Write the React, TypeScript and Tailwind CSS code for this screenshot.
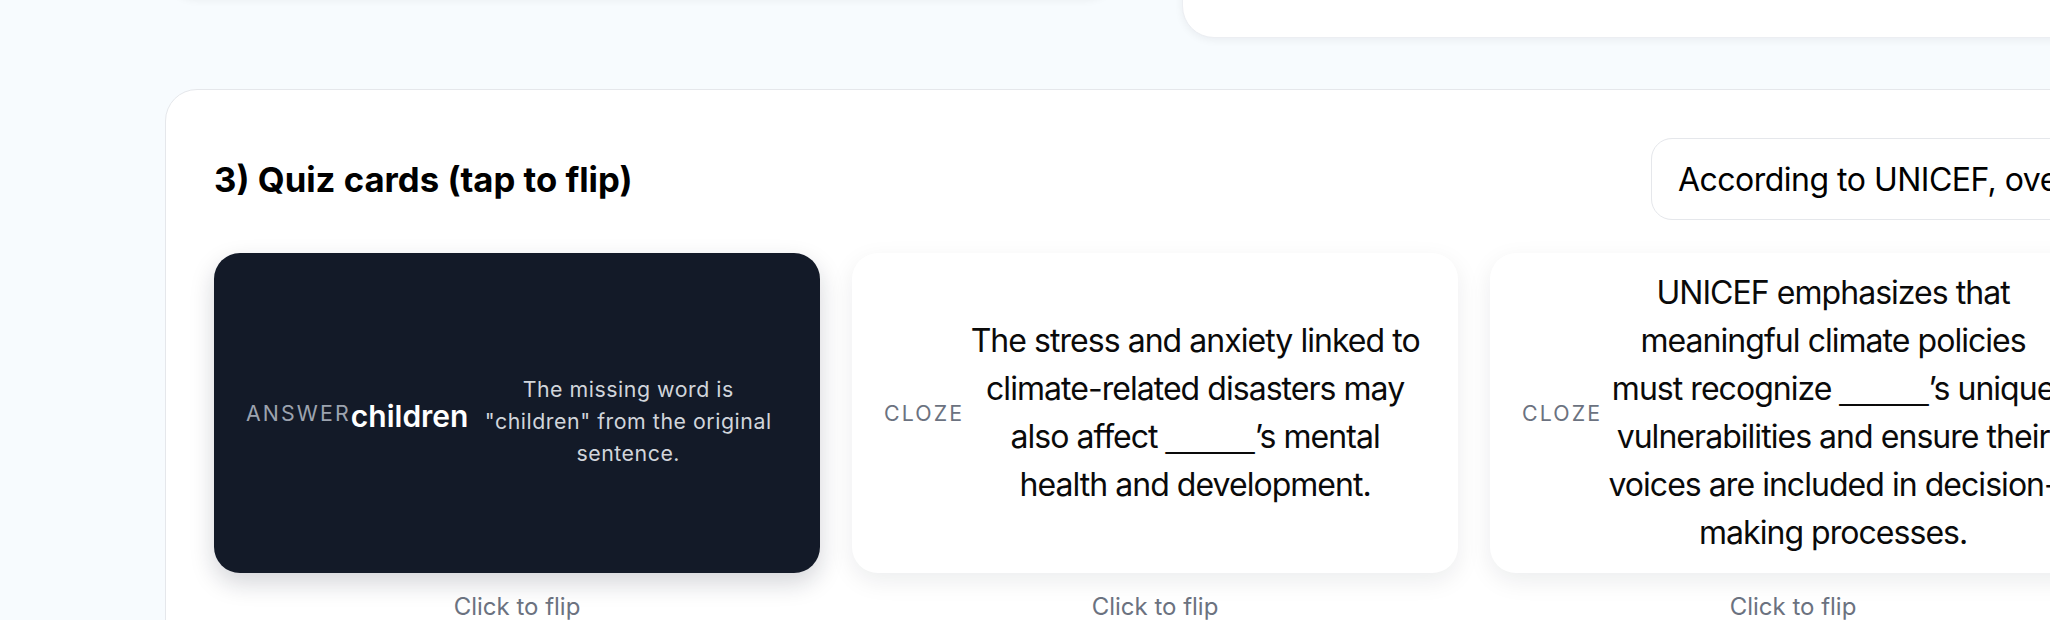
import React from 'react';

type QuizCard = {
  label: string;
  answer?: string;
  text: string;
  flipped: boolean;
};

const BLANK = '_____';

const cards: QuizCard[] = [
  {
    label: 'Answer',
    answer: 'children',
    text: 'The missing word is "children" from the original sentence.',
    flipped: true,
  },
  {
    label: 'Cloze',
    text: 'The stress and anxiety linked to climate-related disasters may also affect _____\u2019s mental health and development.',
    flipped: false,
  },
  {
    label: 'Cloze',
    text: 'UNICEF emphasizes that meaningful climate policies must recognize _____\u2019s unique vulnerabilities and ensure their voices are included in decision-making processes.',
    flipped: false,
  },
];

// the blank uses a font whose underscores are wider and join up
const renderText = (text: string) => {
  const parts = text.split(BLANK);
  return parts.map((part, i) => (
    <React.Fragment key={i}>
      {part}
      {i < parts.length - 1 && (
        <span className="font-['Liberation_Sans',sans-serif] tracking-normal">{BLANK}</span>
      )}
    </React.Fragment>
  ));
};

const FlipCard: React.FC<{ card: QuizCard }> = ({ card }) => (
  <div className="flex flex-col items-center">
    <div
      className={`flex h-[320px] w-full items-center rounded-[26px] p-[32px] ${
        card.flipped
          ? 'bg-[#131a28] shadow-[0_10px_24px_rgba(15,23,42,0.18)]'
          : 'bg-white shadow-[0_8px_24px_rgba(15,23,42,0.08)]'
      }`}
    >
      <span
        className={`shrink-0 text-[21.33px] uppercase leading-[32px] tracking-[0.1em] ${
          card.flipped ? 'text-[#9ca3af]' : 'text-[#6b7280]'
        }`}
      >
        {card.label}
      </span>
      {card.answer && (
        <span className="mt-[6px] shrink-0 text-[30px] font-semibold leading-[40px] text-white">{card.answer}</span>
      )}
      <p
        className={`flex-1 text-center ${
          card.flipped
            ? 'mt-[16px] text-[21.33px] leading-[32px] tracking-[0.025em] text-[#d1d5db]'
            : 'text-[32px] leading-[48px] tracking-[-0.03em] text-[#0a0a0a]'
        }`}
      >
        {renderText(card.text)}
      </p>
    </div>
    <span className="mt-[18px] text-[24px] leading-[32px] text-[#6b7280]">Click to flip</span>
  </div>
);

export default function App() {
  return (
    <div
      className="h-[620px] overflow-hidden bg-[#f7fbfe]"
      style={{ fontFamily: 'Inter, "Noto Sans", sans-serif' }}
    >
      <div className="-mt-[202px] w-[2310px] px-[165px]">
        <div className="grid grid-cols-[953px_1fr] items-start gap-[64px]">
          <div className="h-[200px] rounded-[32px] border border-[#eef0f4] bg-white shadow-[0_2px_8px_rgba(15,23,42,0.06)]" />
          <div className="h-[240px] rounded-[32px] border border-[#eceef2] bg-white shadow-[0_2px_8px_rgba(15,23,42,0.06)]" />
        </div>

        <section className="mt-[51px] rounded-[32px] border border-[#e5e7eb] bg-white p-[48px]">
          <div className="mb-[33px] flex items-center justify-between">
            <h2 className="text-[34.7px] font-bold leading-[48px] text-black">3) Quiz cards (tap to flip)</h2>
            <input
              readOnly
              defaultValue="According to UNICEF, over 1 billion children live in high-risk countries."
              className="h-[82px] w-[445px] rounded-[21px] border border-[#e5e7eb] bg-white px-[26px] text-[32px] leading-[48px] tracking-[-0.016em] text-black outline-none"
            />
          </div>

          <div className="grid grid-cols-3 gap-[32px]">
            {cards.map((card, i) => (
              <FlipCard key={i} card={card} />
            ))}
          </div>
        </section>
      </div>
    </div>
  );
}
